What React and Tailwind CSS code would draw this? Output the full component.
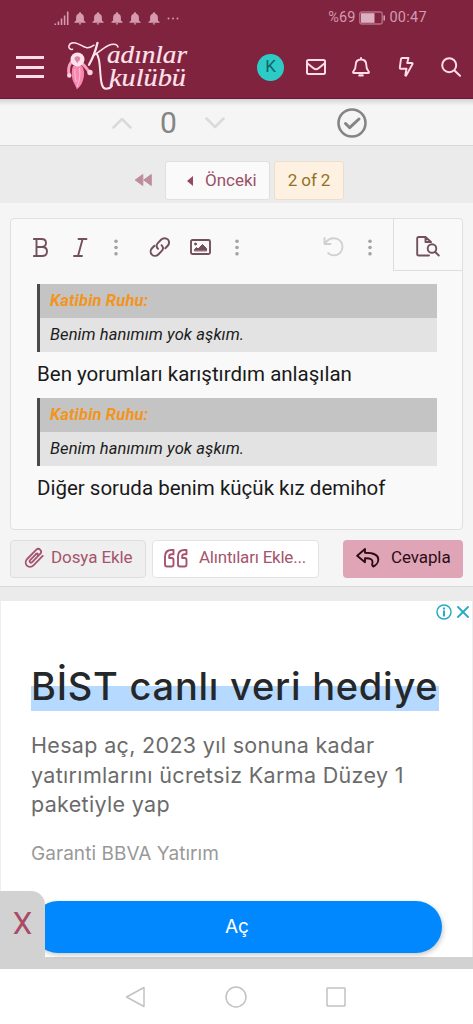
import clsx from 'clsx';

const quotes = [
    { author: 'Katibin Ruhu:', quote: 'Benim hanımım yok aşkım.', reply: 'Ben yorumları karıştırdım anlaşılan' },
    { author: 'Katibin Ruhu:', quote: 'Benim hanımım yok aşkım.', reply: 'Diğer soruda benim küçük kız demihof' },
];

function Icon({ w, h, viewBox, sw = 2, className, children }) {
    return (
        <svg width={w} height={h} viewBox={viewBox || `0 0 ${w} ${h}`} fill="none" stroke="currentColor"
             strokeWidth={sw} strokeLinecap="round" strokeLinejoin="round" className={clsx('block shrink-0', className)}>
            {children}
        </svg>
    );
}

function Dots({ className }) {
    return (
        <svg width="4" height="17" viewBox="0 0 4 17" fill="#a3a3a3" className={clsx('block shrink-0', className)}>
            <circle cx="2" cy="2.2" r="1.8" />
            <circle cx="2" cy="8.5" r="1.8" />
            <circle cx="2" cy="14.8" r="1.8" />
        </svg>
    );
}

function StatusBell() {
    return (
        <svg width="12" height="13" viewBox="0 0 12 13" fill="currentColor" className="block">
            <path d="M6 0.3c.7 0 1.1.5 1.1 1.1C9 2 9.9 3.6 9.9 5.5v3L11.6 10v.7H.4V10L2.1 8.500v-3C2.1 3.600 3 2 4.900 1.400 4.900.8 5.300.3 6 .3zM4.800 11.300h2.400c0 .8-.5 1.300-1.200 1.300s-1.200-.5-1.200-1.300z" />
        </svg>
    );
}

function StatusBar() {
    return (
        <div className="flex h-9 items-center pl-[54px] text-[#d59aae]">
            <svg width="15" height="15" viewBox="0 0 15 15" fill="currentColor" className="block">
                <path d="M.5 12.5h1.6V14H.5zM3.6 10.6h1.6V14H3.6zM6.7 7.6h1.6V14H6.7zM9.8 4.4h1.6V14H9.8zM12.9 .6h1.6V14h-1.6z" />
            </svg>
            <div className="ml-[5px] flex gap-[6.4px]">
                {[0, 1, 2, 3, 4].map((i) => <StatusBell key={i} />)}
            </div>
            <svg width="12" height="3" viewBox="0 0 12 3" fill="currentColor" className="ml-[7px] block">
                <circle cx="1.5" cy="1.5" r="1" />
                <circle cx="6" cy="1.5" r="1" />
                <circle cx="10.5" cy="1.5" r="1" />
            </svg>
            <span className="ml-auto text-[14.5px] tracking-[0.1px]">%69</span>
            <svg width="27" height="14" viewBox="0 0 27 14" fill="none" className="ml-[4px] block">
                <rect x=".8" y="1" width="22.4" height="12" rx="2" stroke="#b46f87" strokeWidth="1.4" />
                <rect x="2" y="2.2" width="13.500" height="9.600" fill="#dcb0c0" />
                <path d="M25.2 4.5v5" stroke="#d59aae" strokeWidth="1.6" />
            </svg>
            <span className="mr-[46px] ml-[3px] text-[14.5px] tracking-[0.3px]">00:47</span>
        </div>
    );
}

function Logo() {
    return (
        <svg width="124" height="52" viewBox="0 0 124 52" className="block shrink-0">
            {/* woman figure */}
            <path d="M5 21.500c-2.500 3.500-3 7-2 12.500M16.500 23c2.500 2 4 4.500 6.500 7.500" fill="none" stroke="#f7a0be" strokeWidth="3" strokeLinecap="round" />
            <path d="M7 25h9c2 3 2.500 7 1.800 11-.8 5.500-3.300 9.500-7 12.500-.3-3-3.500-6.500-4.500-11-.8-4.500-.8-9 .7-12.500z" fill="#f787af" />
            <path d="M13.500 27c1 7 0 13-2.500 19M9 28c-.5 5 .2 9 1.500 13" fill="none" stroke="#ffbfd6" strokeWidth="1" />
            <circle cx="11.500" cy="18.500" r="7" fill="#ffe1ec" />
            <path d="M8.500 17c1-2.500 5.500-2.500 5.800.3.200 2.200-2 2.700-2.800 5-1-1.800-3.300-3-3-5.300z" fill="#dd88a8" />
            <circle cx="3.300" cy="34.500" r="2.200" fill="#ffd0e0" />
            <circle cx="24" cy="31.500" r="2.700" fill="#ffd0e0" />
            {/* lettering flourishes */}
            <g fill="none" stroke="#ffe3ec" strokeLinecap="round" strokeWidth="1.500">
                <path d="M6.500 8.300C4.500 9 2.300 7 3 4.800 3.700 2.300 6.500 1.300 9.500 1.900 14 2.800 17 6.200 21 6.700c3 .3 5-1 7-2.500" />
                <path d="M31.500 1.800c-1.500 6.500-4.500 15-8.500 22" strokeWidth="2.300" />
                <path d="M52 6c-.5-2.500-3.500-3.300-7-2.500-5.500 1.300-11 7-17.500 11" />
                <path d="M30.500 12.500c3.500 4 3.200 13 4 21.500.5 7 1.200 13.700 5.500 13.700 3 0 5-1.200 6-3" strokeWidth="2" />
            </g>
            <g fill="#ffe3ec" stroke="#ffe3ec" strokeWidth=".2" fontStyle="italic" fontFamily="'Liberation Serif', serif">
                <text x="41" y="21.500" fontSize="25" textLength="80" lengthAdjust="spacingAndGlyphs">adınlar</text>
                <text x="43" y="44.500" fontSize="25" textLength="77" lengthAdjust="spacingAndGlyphs">kulübü</text>
            </g>
        </svg>
    );
}

function Header() {
    return (
        <header className="h-[99px] shrink-0 border-b border-[#691b36] bg-[#80233f]">
            <StatusBar />
            <div className="flex h-[62px] items-center pl-4 text-[#ffdce7]">
                <div className="flex w-7 flex-col gap-[6.5px]">
                    <span className="h-[3px] bg-current" />
                    <span className="h-[3px] bg-current" />
                    <span className="h-[3px] bg-current" />
                </div>
                <div className="ml-[22px]"><Logo /></div>
                <div className="ml-[67px] flex size-[27px] items-center justify-center rounded-full bg-[#2dcbc6] pb-px text-[17px] text-[#15616b]">K</div>
                <Icon w={20} h={16} sw={2} className="ml-[22px]">
                    <rect x="1" y="1" width="18" height="14" rx="1.500" />
                    <path d="M1.500 4.500c2.500 2 4.500 3.500 6 4.700 1.500 1.200 3.500 1.200 5 0 1.500-1.200 3.500-2.700 6-4.700" />
                </Icon>
                <Icon w={18} h={20} sw={1.9} className="ml-[26px]">
                    <path d="M9 1v1.500M9 2.500c-3.500 0-5.300 2.500-5.300 5.500 0 4-1 5.300-2.400 6.700-.5.600-.2 1.300.6 1.300h14.200c.8 0 1.100-.7.600-1.300-1.400-1.400-2.400-2.700-2.400-6.700 0-3-1.800-5.500-5.300-5.500z" />
                    <path d="M7.500 18.400h3" strokeWidth="2.400" />
                </Icon>
                <Icon w={16} h={20} sw={1.9} className="ml-[28px]">
                    <path d="M4 1h6.500L9.200 6h4.600c.7 0 1 .5.7 1.100L8.300 18.300c-.4.700-1.200.4-1-.4l1.200-6.200H2.600c-.6 0-.9-.4-.8-1L3 1.900C3.100 1.300 3.400 1 4 1z" />
                </Icon>
                <Icon w={20} h={20} sw={2} className="ml-[27px]">
                    <circle cx="8.200" cy="8.200" r="7" />
                    <path d="M13.500 13.500l5.500 5.300" />
                </Icon>
            </div>
        </header>
    );
}

function VoteBar() {
    return (
        <div className="h-[47px] shrink-0 border-b border-[#d8d8d8] bg-linear-to-b from-[#d6d4d5] via-[#f5f5f5] via-15% to-[#f5f5f5]">
            <div className="flex h-full items-center pt-[2px] pl-28 text-[#dadada]">
                <Icon w={20} h={12} sw={2.500}><path d="M1.500 10.500L10 2l8.500 8.500" /></Icon>
                <span className="ml-7 w-4 text-[30px] leading-none text-[#848484]">0</span>
                <Icon w={20} h={12} sw={2.500} className="ml-[29px]"><path d="M1.500 1.500L10 10l8.500-8.500" /></Icon>
                <Icon w={30} h={30} sw={2.600} className="ml-[112px] text-[#858585]">
                    <circle cx="15" cy="15" r="13.500" />
                    <path d="M8.500 15.500l4.200 4.200L22 11" strokeWidth="3" />
                </Icon>
            </div>
        </div>
    );
}

function Pagination() {
    return (
        <div className="flex h-[57px] shrink-0 items-start bg-[#ebebeb] pt-[15px] pl-[134px] text-[17px]">
            <svg width="18" height="14" viewBox="0 0 18 14" fill="#bf8c9e" className="mt-3 block">
                <path d="M8.800 1.500v11L1.200 7zM17.300 1.500v11L9.700 7z" stroke="#bf8c9e" strokeLinejoin="round" />
            </svg>
            <div className="ml-[13px] flex h-[39px] w-[105px] items-center rounded-[3px] border border-[#e0e0e0] bg-[#fafafa] text-[#9b5068]">
                <svg width="6" height="10" viewBox="0 0 6 10" fill="#934760" className="ml-[21px] block"><path d="M6 0v10L0 5z" /></svg>
                <span className="ml-[12px] whitespace-nowrap">Önceki</span>
            </div>
            <div className="ml-1 flex h-[39px] w-[70px] items-center justify-center rounded-[3px] border border-[#eadfce] bg-[#fef1e2] text-[17px] tracking-[-0.1px] text-[#907321]">2 of 2</div>
        </div>
    );
}

function Toolbar() {
    return (
        <div className="flex h-[52px] items-center pl-[22px] text-[#73505c]">
            <Icon w={15} h={19} sw={1.900} className="mt-1">
                <path d="M.9 1h7.600c3 0 4.500 1.600 4.500 4s-1.500 4-4.500 4H3.500M.9 18h8.200c3.200 0 4.900-1.800 4.900-4.500S12.300 9 9.100 9M3.500 1v17" />
            </Icon>
            <Icon w={15} h={19} sw={1.900} className="mt-1 ml-[25px]">
                <path d="M5.500 1h8M1 18h8M9.600 1L5 18" />
            </Icon>
            <Dots className="mt-1 ml-[26px]" />
            <Icon w={22} h={20} sw={2} className="mt-1 ml-[31px]">
                <path d="M9 11.800c-1.800-1.600-1.900-4-.2-5.700l3.500-3.600c1.800-1.800 4.800-1.800 6.500-.1 1.700 1.700 1.700 4.500-.1 6.300l-2.400 2.500" />
                <path d="M12.600 8.200c1.800 1.600 1.900 4 .2 5.700l-3.500 3.600c-1.800 1.800-4.700 1.800-6.400.1-1.700-1.700-1.700-4.500.1-6.300l2.400-2.500" />
            </Icon>
            <Icon w={21} h={16} sw={1.900} className="mt-1 ml-[19px]">
                <rect x="1" y="1" width="19" height="14" rx="1.500" />
                <circle cx="5.500" cy="5" r="1" fill="currentColor" strokeWidth="1" />
                <path d="M4.500 11.500v-1l2-2 1.500 1.500 4.500-4.500 4 4v2z" fill="currentColor" strokeWidth="1" />
            </Icon>
            <Dots className="mt-1 ml-6" />
            <Icon w={21} h={20} sw={1.900} className="mt-1 ml-[84px] text-[#d0d0d0]">
                <path d="M1.500 1v6h6M2 6.500C4 3 7 1.200 11 1.200c4.800 0 8.500 3.600 8.500 8.500s-3.700 8.700-8.500 8.700c-2.300 0-4.300-.8-5.800-2.300" />
            </Icon>
            <Dots className="mt-1 ml-[24px]" />
            <div className="ml-auto flex h-[52px] w-[69px] items-center border-b border-l border-[#dedede] pl-[22px]">
                <Icon w={24} h={21} sw={1.900} className="mt-1">
                    <path d="M13 19.500H2.500c-.8 0-1.300-.5-1.300-1.300V2.300C1.200 1.500 1.700 1 2.500 1H9.500l5.500 5M9.500 1v5H15" />
                    <circle cx="16" cy="12.500" r="4.300" />
                    <path d="M19.200 16l3.600 3.500" />
                </Icon>
            </div>
        </div>
    );
}

function Editor() {
    return (
        <div className="mx-[10px] h-[312px] rounded-[4px] border border-[#e0e0e0] bg-[#f9f9f9]">
            <Toolbar />
            <div className="mt-[13px] ml-[26px] w-[400px]">
                {quotes.map((q, i) => (
                    <div key={i}>
                        <div className="border-l-[3px] border-[#4b4b4b] italic">
                            <div className="flex h-[34px] items-center bg-[#c4c4c4] pl-[10px] text-[16.5px] font-bold tracking-[0.15px] text-[#f3951c]">{q.author}</div>
                            <div className="flex h-[34px] items-center bg-[#e3e3e3] pl-[10px] text-[16.5px] tracking-[0.1px] text-[#1c1c1c]">{q.quote}</div>
                        </div>
                        <p className="h-[46px] text-[20.5px] leading-[45px] whitespace-nowrap text-[#1a1a1a]">{q.reply}</p>
                    </div>
                ))}
            </div>
        </div>
    );
}

function ReplyActions() {
    return (
        <div className="mt-[10px] flex h-[38px] px-[10px] text-[17px] tracking-[-0.1px] whitespace-nowrap text-[#a5546d]">
            <div className="flex w-[136px] items-center rounded-[4px] border border-[#dedede] bg-[#efefef] pb-[2px] pl-[12px]">
                <Icon w={22} h={22} viewBox="0 0 24 24" sw={2}>
                    <path d="M14.500 7.500l-6.700 6.900c-1.500 1.600.6 3.800 2.200 2.200l8.700-9c3-3.200-1.200-7.500-4.400-4.400L4.800 12.800c-5.200 5.500 1.500 12.200 6.900 6.900l9.800-10" />
                    <path d="M14.500 7.500c1-1 2.400.3 1.500 1.400" />
                </Icon>
                <span className="ml-[6px]">Dosya Ekle</span>
            </div>
            <div className="ml-[6px] flex w-[167px] items-center rounded-[4px] border border-[#e3e3e3] bg-white pb-[2px] pl-[11px]">
                <Icon w={24} h={19} sw={1.900}>
                    <path d="M9.500 1H7.500C3.500 1 1 3.500 1 7.500v8c0 1.300.8 2 2 2h4.500c1.300 0 2-.8 2-2V11c0-1.300-.8-2-2-2H5.200V7.500c0-1.500.8-2.300 2.300-2.300h2z" />
                    <path d="M22.500 1h-2C16.500 1 14 3.500 14 7.500v8c0 1.300.8 2 2 2h4.500c1.300 0 2-.8 2-2V11c0-1.300-.8-2-2-2h-2.300V7.500c0-1.500.8-2.300 2.300-2.300h2z" />
                </Icon>
                <span className="ml-[11px] tracking-[-0.23px]">Alıntıları Ekle...</span>
            </div>
            <div className="ml-auto flex w-[120px] items-center rounded-[4px] bg-[#dfa5b7] pb-[2px] pl-[13px] text-[#2b0c16]">
                <Icon w={24} h={20} sw={1.900}>
                    <path d="M9 1L1.200 7.800 9 14.200v-4c5.500-.2 8.300 1.300 7.300 5.200-.3 1.300-.2 2.300 1 3.100 2-.8 5-3.500 5-7C22.300 6.500 17 4.800 9 4.800z" />
                </Icon>
                <span className="ml-[11px]">Cevapla</span>
            </div>
        </div>
    );
}

function Ad() {
    return (
        <section className="relative mt-[14px] h-[368px] shrink-0 bg-[#d1d2d1] font-[Inter,sans-serif]">
            <div className="h-[356px] overflow-hidden border-x border-[#eee] bg-white">
                <div className="flex justify-end gap-[5px] pt-[3px] pr-[3px] text-[#27abc2]">
                    <Icon w={16} h={16} sw={1.500}>
                        <circle cx="8" cy="8" r="7" />
                        <path d="M8 7.300v4.500M8 4.300v.4" strokeWidth="2" />
                    </Icon>
                    <Icon w={12} h={16} sw={1.800}><path d="M1 3l10 10M11 3L1 13" /></Icon>
                </div>
                <div className="mt-[42px] ml-[30px]">
                    <h2 className="h-[49px] w-[408px] bg-linear-to-b from-transparent from-50% to-[#b6d9ff] to-50% text-[38px] leading-[49px] font-medium tracking-[0.75px] whitespace-nowrap text-[#25282b]">BİST canlı veri hediye</h2>
                    <p className="mt-[20px] text-[21.5px] leading-[29.500px] tracking-[0.33px] whitespace-nowrap text-[#6b6b6b]">
                        Hesap aç, 2023 yıl sonuna kadar<br />
                        yatırımlarını ücretsiz Karma Düzey 1<br />
                        paketiyle yap
                    </p>
                    <p className="mt-[20px] text-[19px] leading-[28px] tracking-[0.05px] text-[#999]">Garanti BBVA Yatırım</p>
                </div>
            </div>
            {/* call to action sits on the lower edge of the card, under the close tab */}
            <div className="absolute top-[300px] left-[32px] flex h-[52px] w-[410px] items-center justify-center rounded-full bg-[#0188fe] text-[19px] text-white shadow-[1px_2px_5px_rgba(0,0,0,0.22)]">Aç</div>
            <div className="absolute bottom-0 left-0 flex h-[78px] w-[45px] items-center justify-center rounded-tr-[14px] bg-[#d1d2d1] pb-[12px] font-[Roboto,sans-serif] text-[31px] text-[#aa4a66]">X</div>
        </section>
    );
}

function NavBar() {
    return (
        <nav className="flex h-[55px] shrink-0 items-center bg-white pl-[125px] text-[#c2c2c2]">
            <Icon w={21} h={22} sw={1.500}><path d="M19 1.500v19L1.500 11z" /></Icon>
            <Icon w={22} h={22} sw={1.500} className="ml-[79px]"><circle cx="11" cy="11" r="10" /></Icon>
            <Icon w={20} h={20} sw={1.500} className="ml-[79px]"><rect x="1" y="1" width="18" height="18" rx=".5" /></Icon>
        </nav>
    );
}

export default function App() {
    return (
        <div className="flex h-[1024px] w-[473px] flex-col overflow-hidden bg-[#ebebeb] font-[Roboto,'Liberation_Sans',sans-serif]">
            <Header />
            <VoteBar />
            <Pagination />
            <main className="h-[384px] shrink-0 border-b border-[#dadada] bg-[#f5f5f5] pt-[15px]">
                <Editor />
                <ReplyActions />
            </main>
            <Ad />
            <NavBar />
        </div>
    );
}
